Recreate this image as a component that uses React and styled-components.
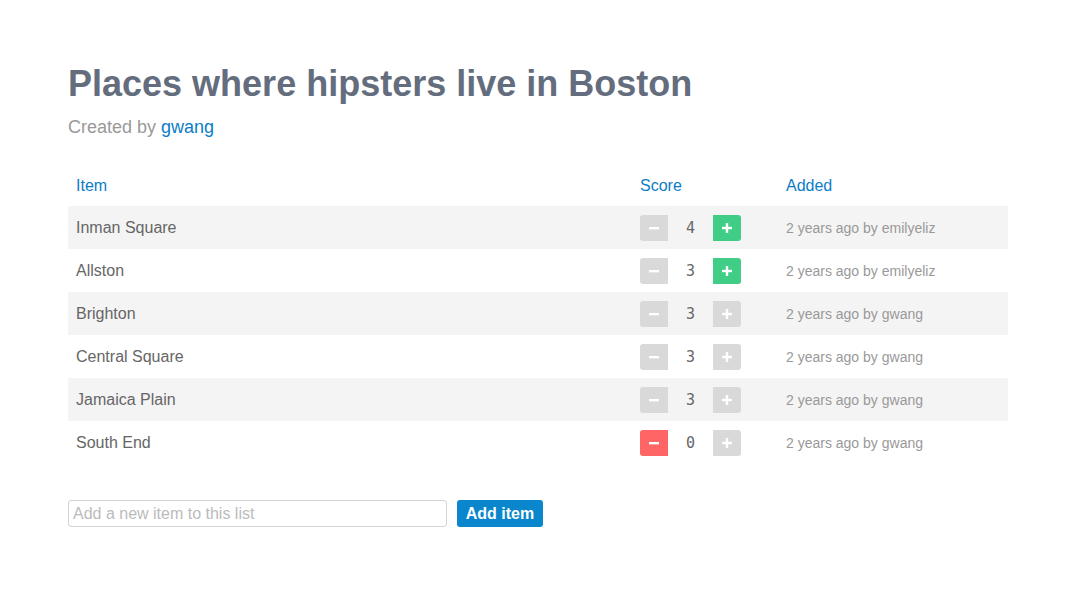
import React from 'react'
import styled, { createGlobalStyle } from 'styled-components'

const GlobalStyle = createGlobalStyle`
  body {
    margin: 0;
    background: #fff;
    font-family: 'Liberation Sans', Arial, sans-serif;
  }
`

const items = [
  { name: 'Inman Square', score: 4, by: 'emilyeliz', up: true, down: false },
  { name: 'Allston', score: 3, by: 'emilyeliz', up: true, down: false },
  { name: 'Brighton', score: 3, by: 'gwang', up: false, down: false },
  { name: 'Central Square', score: 3, by: 'gwang', up: false, down: false },
  { name: 'Jamaica Plain', score: 3, by: 'gwang', up: false, down: false },
  { name: 'South End', score: 0, by: 'gwang', up: false, down: true },
]

const App = () => {
  return (
    <Page>
      <GlobalStyle />
      <Title>Places where hipsters live in Boston</Title>
      <Byline>
        Created by <Link href="#">gwang</Link>
      </Byline>
      <Table>
        <thead>
          <tr>
            <HeadCell $width="564px">Item</HeadCell>
            <HeadCell $width="146px">Score</HeadCell>
            <HeadCell $width="230px">Added</HeadCell>
          </tr>
        </thead>
        <tbody>
          {items.map((item, i) => (
            <Row key={item.name} $striped={i % 2 === 0}>
              <NameCell>{item.name}</NameCell>
              <Cell>
                <Score>
                  <VoteButton $side="left" $active={item.down} $color="#ff6565">
                    <Minus />
                  </VoteButton>
                  <Count>{item.score}</Count>
                  <VoteButton $side="right" $active={item.up} $color="#40cd85">
                    <Plus />
                  </VoteButton>
                </Score>
              </Cell>
              <AddedCell>2 years ago by {item.by}</AddedCell>
            </Row>
          ))}
        </tbody>
      </Table>
      <AddForm>
        <ItemInput placeholder="Add a new item to this list" />
        <AddButton>Add item</AddButton>
      </AddForm>
    </Page>
  )
}

export default App

const Minus = () => (
  <svg width="12" height="12" viewBox="0 0 12 12">
    <rect x="1" y="5" width="10" height="2.4" fill="#fff" />
  </svg>
)

const Plus = () => (
  <svg width="12" height="12" viewBox="0 0 12 12">
    <rect x="1" y="4.8" width="10" height="2.4" fill="#fff" />
    <rect x="4.8" y="1" width="2.4" height="10" fill="#fff" />
  </svg>
)

const Page = styled.div`
  padding: 62px 68px 40px;
  width: 940px;
`

const Title = styled.h1`
  margin: 0;
  font-size: 36px;
  line-height: 44px;
  font-weight: bold;
  color: #646d7d;
`

const Byline = styled.p`
  margin: 9px 0 0;
  font-size: 18px;
  line-height: 24px;
  color: #999;
`

const Link = styled.a`
  color: #0b7dc8;
  text-decoration: none;
`

const Table = styled.table`
  margin-top: 25px;
  width: 940px;
  table-layout: fixed;
  border-collapse: collapse;
`

const HeadCell = styled.th`
  box-sizing: border-box;
  width: ${(p) => p.$width};
  padding: 10px 8px 8px;
  height: 42px;
  text-align: left;
  font-weight: normal;
  font-size: 16px;
  color: #0b7dc8;
`

const Row = styled.tr`
  background: ${(p) => (p.$striped ? '#f4f4f4' : '#fff')};
  height: 43px;
`

const Cell = styled.td`
  padding: 1px 8px 0;
  vertical-align: middle;
`

const NameCell = styled(Cell)`
  font-size: 16px;
  color: #666;
`

const AddedCell = styled(Cell)`
  font-size: 14px;
  color: #999;
`

const Score = styled.div`
  display: flex;
  align-items: center;
`

const VoteButton = styled.button`
  width: 28px;
  height: 26px;
  padding: 0;
  border: none;
  display: flex;
  align-items: center;
  justify-content: center;
  background: ${(p) => (p.$active ? p.$color : '#d9d9d9')};
  border-radius: ${(p) => (p.$side === 'left' ? '3px 0 0 3px' : '0 3px 3px 0')};
`

const Count = styled.span`
  width: 45px;
  text-align: center;
  font-family: 'DejaVu Sans Mono', monospace;
  font-size: 15px;
  color: #666;
`

const AddForm = styled.div`
  display: flex;
  align-items: center;
  gap: 10px;
  margin-top: 36px;
`

const ItemInput = styled.input`
  box-sizing: border-box;
  width: 379px;
  height: 27px;
  padding: 0 4px;
  border: 1px solid #d4d4d4;
  border-radius: 3px;
  font-family: 'Liberation Sans', Arial, sans-serif;
  font-size: 16px;
  color: #666;
  &::placeholder {
    color: #bbb;
  }
`

const AddButton = styled.button`
  height: 27px;
  width: 86px;
  border: none;
  border-radius: 3px;
  background: #0a87cc;
  color: #fff;
  font-family: 'Liberation Sans', Arial, sans-serif;
  font-size: 16px;
  font-weight: bold;
  padding: 0;
`
